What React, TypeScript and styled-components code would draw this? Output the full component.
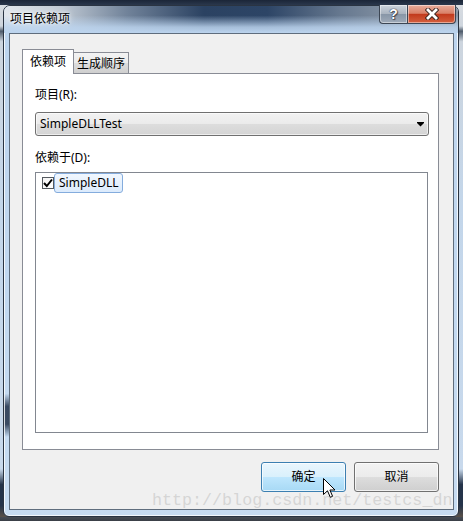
import React from "react";
import styled, { createGlobalStyle } from "styled-components";

const GlobalStyle = createGlobalStyle`
  html, body { margin: 0; padding: 0; background: #1e2a3b; }
  body {
    font-family: "Noto Sans", "Noto Sans CJK SC", sans-serif;
    font-size: 12px;
    color: #000;
  }
  * { box-sizing: border-box; }
`;

const Desktop = styled.div`
  position: relative;
  width: 463px;
  height: 521px;
  overflow: hidden;
  padding: 5px 4px 4px 3px;
  background:
    linear-gradient(to bottom, #1b2638 0, #2a374c 5px, transparent 5px),
    linear-gradient(to top, #3a3f47 0, #474c54 4px, transparent 4px),
    linear-gradient(
      to bottom,
      #d9dde2 0%,
      #cfd6de 5%,
      #4e5b6b 6%,
      #cdd5de 8%,
      #c3d6ea 40%,
      #c8d9ec 90%,
      #25344a 93%,
      #25344a 97%,
      #6b5a48 100%
    );
`;

const Window = styled.div`
  width: 456px;
  height: 512px;
  display: flex;
  flex-direction: column;
  border: 1px solid #2a3442;
  border-radius: 7px 7px 6px 6px;
  box-shadow: inset 0 0 0 1px rgba(255, 255, 255, 0.8);
  background:
    linear-gradient(
        to bottom,
        transparent 76%,
        rgba(33, 48, 72, 0.85) 78.5%,
        rgba(33, 48, 72, 0.85) 82%,
        transparent 84.5%
      )
      left top / 5px 100% no-repeat,
    linear-gradient(to bottom, #bcd4ee, #c7dcf2);
`;

const TitleBar = styled.div`
  height: 27px;
  display: flex;
  align-items: flex-start;
  justify-content: space-between;
  padding: 0 2px 0 6px;
  border-radius: 6px 6px 0 0;
  background:
    linear-gradient(
      to bottom,
      rgba(188, 212, 238, 0) 0%,
      rgba(188, 212, 238, 0) 35%,
      rgba(188, 212, 238, 0.85) 78%,
      #bcd4ee 100%
    ),
    linear-gradient(
      to right,
      #e2e7ed 0%,
      #c3ccd6 12%,
      #71839a 27%,
      #2b4262 44%,
      #2d4566 58%,
      #66788f 74%,
      #8593a4 86%,
      #8a97a6 100%
    );
`;

const Title = styled.div`
  margin-top: 4px;
  line-height: 16px;
  font-family: "Noto Sans CJK SC", sans-serif;
  font-size: 12px;
  color: #000;
  text-shadow: 0 0 6px rgba(255, 255, 255, 0.9), 0 0 3px rgba(255, 255, 255, 0.9);
`;

const CaptionButtons = styled.div`
  display: flex;
  margin-top: -1px;
  height: 19px;
`;

const CapBtn = styled.div<{ $kind: "help" | "close" }>`
  height: 19px;
  width: ${(p) => (p.$kind === "help" ? "28px" : "49px")};
  display: flex;
  align-items: center;
  justify-content: center;
  border: 1px solid #3c4654;
  border-top: none;
  ${(p) =>
    p.$kind === "help"
      ? `border-radius: 0 0 0 4px; border-right: none;`
      : `border-radius: 0 0 4px 0;`}
  box-shadow: inset 0 0 0 1px rgba(255, 255, 255, 0.45);
  background: ${(p) =>
    p.$kind === "help"
      ? "linear-gradient(to bottom, #cdd4dc 0%, #aab4c0 48%, #8896a7 52%, #9fabb9 100%)"
      : "linear-gradient(to bottom, #e8ad9c 0%, #d98068 46%, #c23a1d 52%, #d4603f 100%)"};
`;

const HelpGlyph = styled.span`
  font-family: "Liberation Sans", sans-serif;
  font-weight: bold;
  font-size: 14px;
  line-height: 14px;
  color: #fff;
  text-shadow: 0 0 1px #223, 0 0 1px #223, 1px 1px 1px rgba(0, 0, 0, 0.5);
`;

const Client = styled.div`
  flex: 1;
  margin: 0 4px 6px 5px;
  border: 1px solid #5f6d7d;
  background: #f0f0f0;
  display: flex;
  flex-direction: column;
  padding: 15px 14px 0 12px;
`;

const TabStrip = styled.div`
  display: flex;
  align-items: flex-end;
  height: 25px;
  margin-bottom: -1px;
  position: relative;
  z-index: 1;
`;

const Tab = styled.div<{ $active?: boolean }>`
  font-family: "Noto Sans CJK SC", sans-serif;
  line-height: 16px;
  border: 1px solid #898c95;
  position: relative;
  ${(p) =>
    p.$active
      ? `
    height: 25px;
    width: 52px;
    border-bottom: none;
    background: #fff;
    padding-top: 3px;
    text-align: center;
    z-index: 2;
  `
      : `
    height: 22px;
    width: 56px;
    margin-left: -1px;
    padding-top: 2px;
    text-align: center;
    background: linear-gradient(to bottom, #f3f3f3 0%, #ebebeb 50%, #dddddd 51%, #cfcfcf 100%);
  `}
`;

const TabPanel = styled.div`
  width: 417px;
  height: 377px;
  border: 1px solid #898c95;
  background: #fff;
  padding: 13px 0 0 12px;
  display: flex;
  flex-direction: column;
`;

const Label = styled.div<{ $gap: number }>`
  margin-top: ${(p) => p.$gap}px;
  height: 16px;
  line-height: 16px;
  font-family: "Noto Sans", "Noto Sans CJK SC", sans-serif;
`;

const Combo = styled.div`
  margin-top: 9px;
  width: 394px;
  height: 24px;
  border: 1px solid #707070;
  border-radius: 3px;
  box-shadow: inset 0 0 0 1px rgba(255, 255, 255, 0.6);
  background: linear-gradient(to bottom, #f2f2f2 0%, #ebebeb 50%, #dddddd 51%, #d4d4d4 100%);
  display: flex;
  align-items: center;
  justify-content: space-between;
  padding: 0 4px 0 4px;
  line-height: 16px;
`;

const ListBox = styled.div`
  margin-top: 6px;
  width: 393px;
  height: 261px;
  border: 1px solid #828790;
  background: #fff;
  padding: 0 0 0 6px;
`;

const ListRow = styled.div`
  display: flex;
  align-items: center;
  height: 20px;
`;

const CheckBox = styled.div`
  width: 12px;
  height: 12px;
  border: 1px solid #555a60;
  background: linear-gradient(to bottom right, #f4f4f4, #ffffff);
  display: flex;
  align-items: center;
  justify-content: center;
`;

const Item = styled.div`
  height: 20px;
  margin-left: 0;
  padding: 0 3px 0 4px;
  border: 1px solid #84acdd;
  border-radius: 3px;
  background: linear-gradient(to bottom, #f1f7fe 0%, #dcebfc 100%);
  line-height: 17px;
`;

const ButtonRow = styled.div`
  display: flex;
  justify-content: flex-end;
  gap: 8px;
  margin-top: 12px;
`;

const Button = styled.div<{ $default?: boolean }>`
  width: 85px;
  height: 30px;
  border-radius: 3px;
  display: flex;
  align-items: center;
  justify-content: center;
  padding-bottom: 3px;
  font-family: "Noto Sans CJK SC", sans-serif;
  box-shadow: inset 0 0 0 1px rgba(255, 255, 255, 0.7);
  border: 1px solid ${(p) => (p.$default ? "#3c7fb1" : "#707070")};
  background: ${(p) =>
    p.$default
      ? "linear-gradient(to bottom, #eaf6fd 0%, #d9f0fc 50%, #bee6fd 51%, #a7d9f5 100%)"
      : "linear-gradient(to bottom, #f2f2f2 0%, #ebebeb 50%, #dddddd 51%, #cfcfcf 100%)"};
`;

const Watermark = styled.div`
  position: absolute;
  left: 152px;
  top: 492px;
  font-family: "Liberation Mono", monospace;
  font-size: 16.7px;
  line-height: 17px;
  color: rgba(190, 190, 190, 0.55);
  white-space: nowrap;
  pointer-events: none;
`;

const Cursor = styled.svg`
  position: absolute;
  left: 323px;
  top: 478px;
`;

const CloseIcon = () => (
  <svg width="14" height="12" viewBox="0 0 14 12">
    <path d="M3 2 L11 10 M11 2 L3 10" stroke="#3a2520" strokeWidth="4.6" strokeLinecap="square" fill="none" />
    <path d="M3 2 L11 10 M11 2 L3 10" stroke="#ffffff" strokeWidth="2.8" strokeLinecap="square" fill="none" />
  </svg>
);

const ComboArrow = () => (
  <svg width="7" height="5" viewBox="0 0 7 5">
    <rect x="0" y="0" width="7" height="1" fill="#000" />
    <path d="M0 1 L7 1 L3.5 4.5 Z" fill="#000" />
  </svg>
);

const CheckMark = () => (
  <svg width="10" height="10" viewBox="0 0 10 10">
    <path d="M1 5 L3.8 8 L9 1.5" stroke="#000" strokeWidth="2" fill="none" />
  </svg>
);

export default function App() {
  return (
    <>
      <GlobalStyle />
      <Desktop>
        <Window>
          <TitleBar>
            <Title>项目依赖项</Title>
            <CaptionButtons>
              <CapBtn $kind="help">
                <HelpGlyph>?</HelpGlyph>
              </CapBtn>
              <CapBtn $kind="close">
                <CloseIcon />
              </CapBtn>
            </CaptionButtons>
          </TitleBar>
          <Client>
            <TabStrip>
              <Tab $active>依赖项</Tab>
              <Tab>生成顺序</Tab>
            </TabStrip>
            <TabPanel>
              <Label $gap={0}>项目(R):</Label>
              <Combo>
                <span>SimpleDLLTest</span>
                <ComboArrow />
              </Combo>
              <Label $gap={14}>依赖于(D):</Label>
              <ListBox>
                <ListRow>
                  <CheckBox>
                    <CheckMark />
                  </CheckBox>
                  <Item>SimpleDLL</Item>
                </ListRow>
              </ListBox>
            </TabPanel>
            <ButtonRow>
              <Button $default>确定</Button>
              <Button>取消</Button>
            </ButtonRow>
          </Client>
        </Window>
        <Watermark>http://blog.csdn.net/testcs_dn</Watermark>
        <Cursor width="14" height="21" viewBox="0 0 14 21">
          <path
            d="M0.5 0.5 L0.5 16.5 L4.5 12.8 L7.3 19.3 L9.6 18.3 L6.9 12 L12 12 Z"
            fill="#fff"
            stroke="#000"
            strokeWidth="1"
            strokeLinejoin="miter"
          />
        </Cursor>
      </Desktop>
    </>
  );
}
